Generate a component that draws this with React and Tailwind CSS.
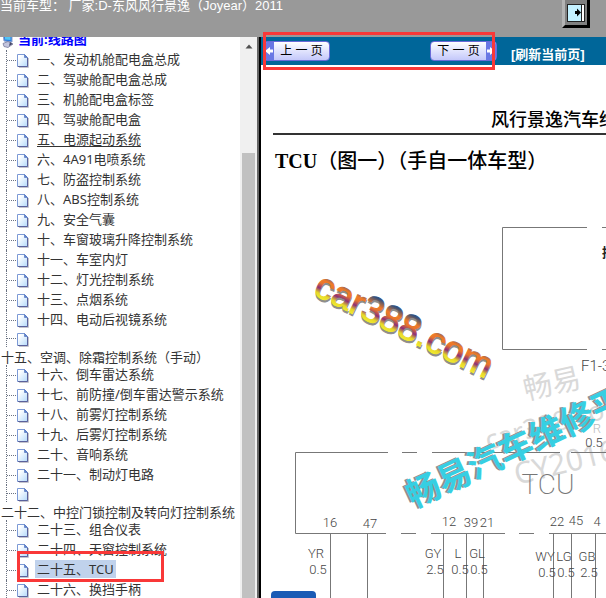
import React from 'react';

const treeItems = [
  { label: '一、发动机舱配电盒总成' },
  { label: '二、驾驶舱配电盒总成' },
  { label: '三、机舱配电盒标签' },
  { label: '四、驾驶舱配电盒' },
  { label: '五、电源起动系统', underlined: true },
  { label: '六、4A91电喷系统' },
  { label: '七、防盗控制系统' },
  { label: '八、ABS控制系统' },
  { label: '九、安全气囊' },
  { label: '十、车窗玻璃升降控制系统' },
  { label: '十一、车室内灯' },
  { label: '十二、灯光控制系统' },
  { label: '十三、点烟系统' },
  { label: '十四、电动后视镜系统' },
  { label: '十五、空调、除霜控制系统（手动）', wrapped: true },
  { label: '十六、倒车雷达系统' },
  { label: '十七、前防撞/倒车雷达警示系统' },
  { label: '十八、前雾灯控制系统' },
  { label: '十九、后雾灯控制系统' },
  { label: '二十、音响系统' },
  { label: '二十一、制动灯电路' },
  { label: '二十二、中控门锁控制及转向灯控制系统', wrapped: true },
  { label: '二十三、组合仪表' },
  { label: '二十四、天窗控制系统' },
  { label: '二十五、TCU', selected: true },
  { label: '二十六、换挡手柄' },
];

const pins = [
  { x: 330, y: 527, n: '16' },
  { x: 370, y: 528, n: '47' },
  { x: 449, y: 526, n: '12' },
  { x: 471, y: 527, n: '39' },
  { x: 487, y: 527, n: '21' },
  { x: 557, y: 526, n: '22' },
  { x: 576, y: 525, n: '45' },
  { x: 597, y: 526, n: '4' },
];

const wires = [
  { x: 316, y: 558, color: 'YR', size: '0.5' },
  { x: 433, y: 558, color: 'GY', size: '2.5' },
  { x: 458, y: 558, color: 'L', size: '0.5' },
  { x: 477, y: 558, color: 'GL', size: '0.5' },
  { x: 545, y: 561, color: 'WY', size: '0.5' },
  { x: 564, y: 561, color: 'LG', size: '0.5' },
  { x: 587, y: 561, color: 'GB', size: '2.5' },
];

const wireLines = [330.5, 367.5, 443.5, 466.5, 483.5, 553.5, 571.5, 595.5];

const PageIcon = () => (
  <svg className="h-4 w-3.5 shrink-0" viewBox="0 0 14 16">
    <defs>
      <linearGradient id="page" x1="0" y1="0" x2="1" y2="1">
        <stop offset="0.2" stopColor="#ffffff" />
        <stop offset="1" stopColor="#b4dafb" />
      </linearGradient>
    </defs>
    <path d="M3 15.500H12.500V6" fill="none" stroke="#c4c4cc" />
    <path d="M1.500 2.500H8.500L11.500 5.500V14.500H1.500Z" fill="url(#page)" stroke="#7c9ad6" />
    <path d="M11.500 6V14.500H2" fill="none" stroke="#5a619c" />
    <path d="M8.500 2.500V5.500H11.500Z" fill="#5f86cf" stroke="#4d6db8" strokeWidth="0.6" />
  </svg>
);

const ComputerIcon = () => (
  <svg className="h-4 w-4 shrink-0" viewBox="0 0 16 16">
    <path d="M3 1 12 2V10L4 9Z" fill="#2c7fe0" stroke="#8a9ccc" />
    <path d="M5 3 10.500 3.500V8L5 7.500Z" fill="#52c5f5" />
    <path d="M3 11.500 8 9.500 13 12 8 15.500 4 14.500Z" fill="#c3c5de" stroke="#777a9c" strokeWidth="0.8" />
    <path d="M10 10 12.500 12 9 14Z" fill="#454868" />
  </svg>
);

const Branch = ({ className }) => (
  <span className={`ml-1.5 flex w-2.5 shrink-0 items-center border-l border-dotted border-gray-500 ${className}`}>
    <span className="w-full border-t border-dotted border-gray-500" />
  </span>
);

const TreeItem = ({ item }) => {
  if (item.wrapped) {
    return (
      <li>
        <a href="#" className="block">
          <span className="flex h-[17px] items-center">
            <Branch className="h-[17px]" />
            <PageIcon />
          </span>
          <span className="block h-[18px] pl-px leading-5">{item.label}</span>
        </a>
      </li>
    );
  }

  return (
    <li className="flex h-5 items-start">
      <Branch className="h-5" />
      <span className="flex h-5 items-center">
        <PageIcon />
      </span>
      <a
        href="#"
        className={`ml-[5px] px-0.5 leading-[18px] ${item.selected ? 'bg-[#c0d2ec]' : ''} ${
          item.underlined ? 'underline underline-offset-2' : ''
        }`}
      >
        {item.label}
      </a>
    </li>
  );
};

const PageButton = ({ label, next }) => (
  <button
    type="button"
    className={`flex h-5 w-[67px] items-stretch overflow-hidden rounded-sm border border-[#6a6ad8] bg-linear-to-b from-white to-[#c4c8fa] text-[12px] leading-[18px] text-black ${
      next ? 'flex-row-reverse' : ''
    }`}
  >
    <span className="flex w-2.5 items-center justify-center bg-[#6a78e4]">
      <svg className="h-2 w-2" viewBox="0 0 8 8">
        <path
          d={next ? 'M0 2.500H3V0L8 4 3 8V5.500H0Z' : 'M8 2.500H5V0L0 4 5 8V5.500H8Z'}
          fill="#ffffff"
        />
      </svg>
    </span>
    <span className="flex-1 text-center whitespace-nowrap">{label}</span>
  </button>
);

const WiringDiagram = () => (
  <svg
    className="block h-[423px] w-[345px] overflow-visible"
    viewBox="261 175 345 423"
    fontFamily="Roboto, 'Noto Sans CJK SC', sans-serif"
  >
    <defs>
      <linearGradient id="logo" gradientUnits="userSpaceOnUse" x1="0" y1="-25" x2="0" y2="0">
        <stop offset="0" stopColor="#34507c" />
        <stop offset="0.3" stopColor="#f07a28" />
        <stop offset="0.45" stopColor="#e8762c" />
        <stop offset="0.65" stopColor="#8c2f78" />
        <stop offset="0.85" stopColor="#e6d827" />
        <stop offset="1" stopColor="#f2e830" />
      </linearGradient>
    </defs>

    <g fill="#d9d9d9" fontFamily="'Noto Sans', 'Noto Sans CJK SC', sans-serif">
      <text transform="translate(526 400) rotate(-13)" fontSize="29">畅易</text>
      <text transform="translate(488 450) rotate(-15)" fontSize="27">car388.com</text>
      <text transform="translate(517 485) rotate(-14)" fontSize="30">CY2016</text>
    </g>

    <g fill="none" stroke="#777777">
      <path d="M587 227.500H502.500V349.500H587M602 227.500H640M602 349.500H640" />
      <path d="M388 452.500H295.500V533.500H386M402 452.500H417M432 452.500H560M571 452.500H640" />
      <path d="M401 533.500H416M431 533.500H505M519 533.500H534M549 533.500H640" />
      {wireLines.map((x) => (
        <path key={x} d={`M${x} 533V640`} />
      ))}
    </g>

    <g fill="#444444" fontWeight="300" fontSize="13" textAnchor="middle">
      {pins.map((pin) => (
        <text key={pin.n} x={pin.x} y={pin.y}>{pin.n}</text>
      ))}
      {wires.map((wire) => (
        <g key={wire.x}>
          <text x={wire.x} y={wire.y}>{wire.color}</text>
          <text x={wire.x + 2} y={wire.y + 16}>{wire.size}</text>
        </g>
      ))}
      <text x="597" y="433" fill="#bbbbbb">R</text>
      <text x="594" y="447">0.5</text>
      <text x="548" y="494" fontSize="28" fontWeight="200" fill="#777777">TCU</text>
      <text x="581" y="371" fontSize="15" textAnchor="start">F1-36</text>
      <text x="602" y="257" fontSize="13" fontWeight="700" fill="#222222" textAnchor="start">接</text>
    </g>

    <g transform="translate(312 294) rotate(26)" fontFamily="'Liberation Sans', sans-serif" fontSize="37">
      <text x="1" y="2" fill="#8d8d8d" stroke="#8d8d8d">car388.com</text>
      <text x="0" y="0" fill="url(#logo)" stroke="url(#logo)">car388.com</text>
    </g>

    <g transform="translate(423 492) rotate(-25)" fontFamily="'Noto Sans CJK SC', sans-serif" fontWeight="700" fontSize="34">
      <text x="-18" y="10" fill="#8f8f8f">畅易汽车维修平台</text>
      <text x="-16" y="11" fill="#36cfe2">畅易汽车维修平台</text>
    </g>
  </svg>
);

const App = () => {
  return (
    <div className="relative flex h-screen flex-col overflow-hidden bg-white font-['Liberation_Sans','Noto_Sans_CJK_SC',sans-serif] text-[13px] text-[#333333]">
      <header className="flex h-[37px] shrink-0 items-start justify-between bg-[#999999] pr-4">
        <p className="text-[13px] leading-3 whitespace-nowrap text-white">
          当前车型： 厂家:D-东风风行景逸（Joyear）2011
        </p>
        <button
          type="button"
          aria-label="退出"
          className="flex h-7 w-7 items-center justify-center border-3 border-t-0 border-r-black border-b-black border-l-[#b4b4b4] bg-[#808080]"
        >
          <svg className="h-[18px] w-[18px]" viewBox="0 0 18 18">
            <path d="M0 0H18V18H0Z" fill="#222222" />
            <path d="M1 1H14V17H1Z" fill="#c4f1ff" />
            <path d="M15 1H17V17H15Z" fill="#ffffff" />
            <path d="M8 7H10V4.500L14 8.500 10 12.500V10H8Z" fill="#000000" />
          </svg>
        </button>
      </header>

      <div className="flex min-h-0 flex-1">
        <aside className="flex w-[261px] shrink-0 overflow-hidden border-r-2 border-black font-['Noto_Sans','Noto_Sans_CJK_SC',sans-serif]">
          <nav className="-mt-[7px] w-60 shrink-0 whitespace-nowrap">
            <a href="#" className="flex h-5 items-center gap-0.5 font-bold text-[#0000ff]">
              <ComputerIcon />
              当前:线路图
            </a>
            <ul>
              {treeItems.map((item) => (
                <TreeItem key={item.label} item={item} />
              ))}
            </ul>
          </nav>
          <div className="flex flex-1 flex-col items-center border-r-2 border-[#666666] bg-[#f0f0f0]">
            <svg className="mt-1.5 h-2 w-2" viewBox="0 0 8 8">
              <path d="M0.500 5.500 4 1.500 7.500 5.500Z" fill="#505050" />
            </svg>
            <div className="mt-[102px] w-[13px] flex-1 bg-[#c1c1c1]" />
          </div>
        </aside>

        <main className="relative min-w-0 flex-1 overflow-hidden bg-white">
          <div className="flex h-7 items-center bg-[#006699] pl-0.5 whitespace-nowrap">
            <PageButton label="上 一 页" />
            <div className="ml-[100px]">
              <PageButton label="下 一 页" next />
            </div>
            <a href="#" className="mt-2 ml-3.5 font-bold text-white">[刷新当前页]</a>
          </div>

          <article className="pl-3 text-black">
            <p className="mt-[42px] pl-[218px] font-['Liberation_Serif','Noto_Sans_CJK_SC',serif] text-[18px] leading-[26px] font-medium whitespace-nowrap">
              风行景逸汽车维修手册
            </p>
            <hr className="border-t-2 border-[#333333]" />
            <h1 className="mt-3 pl-0.5 font-['Liberation_Serif','Noto_Sans_CJK_SC',serif] text-[20px] leading-7 font-bold whitespace-nowrap">
              TCU<span className="font-medium">（图一）（手自一体车型）</span>
            </h1>
          </article>
          <WiringDiagram />
          <div className="absolute bottom-0 left-2.5 h-[7px] w-[45px] rounded-t bg-[#1a5bb5]" />
        </main>
      </div>

      <div className="pointer-events-none absolute top-8 left-[263px] h-[38px] w-[232px] border-3 border-[#f93838]" />
      <div className="pointer-events-none absolute top-[551px] left-[17px] h-[31px] w-[147px] border-3 border-[#f93838]" />
    </div>
  );
};

export default App;
